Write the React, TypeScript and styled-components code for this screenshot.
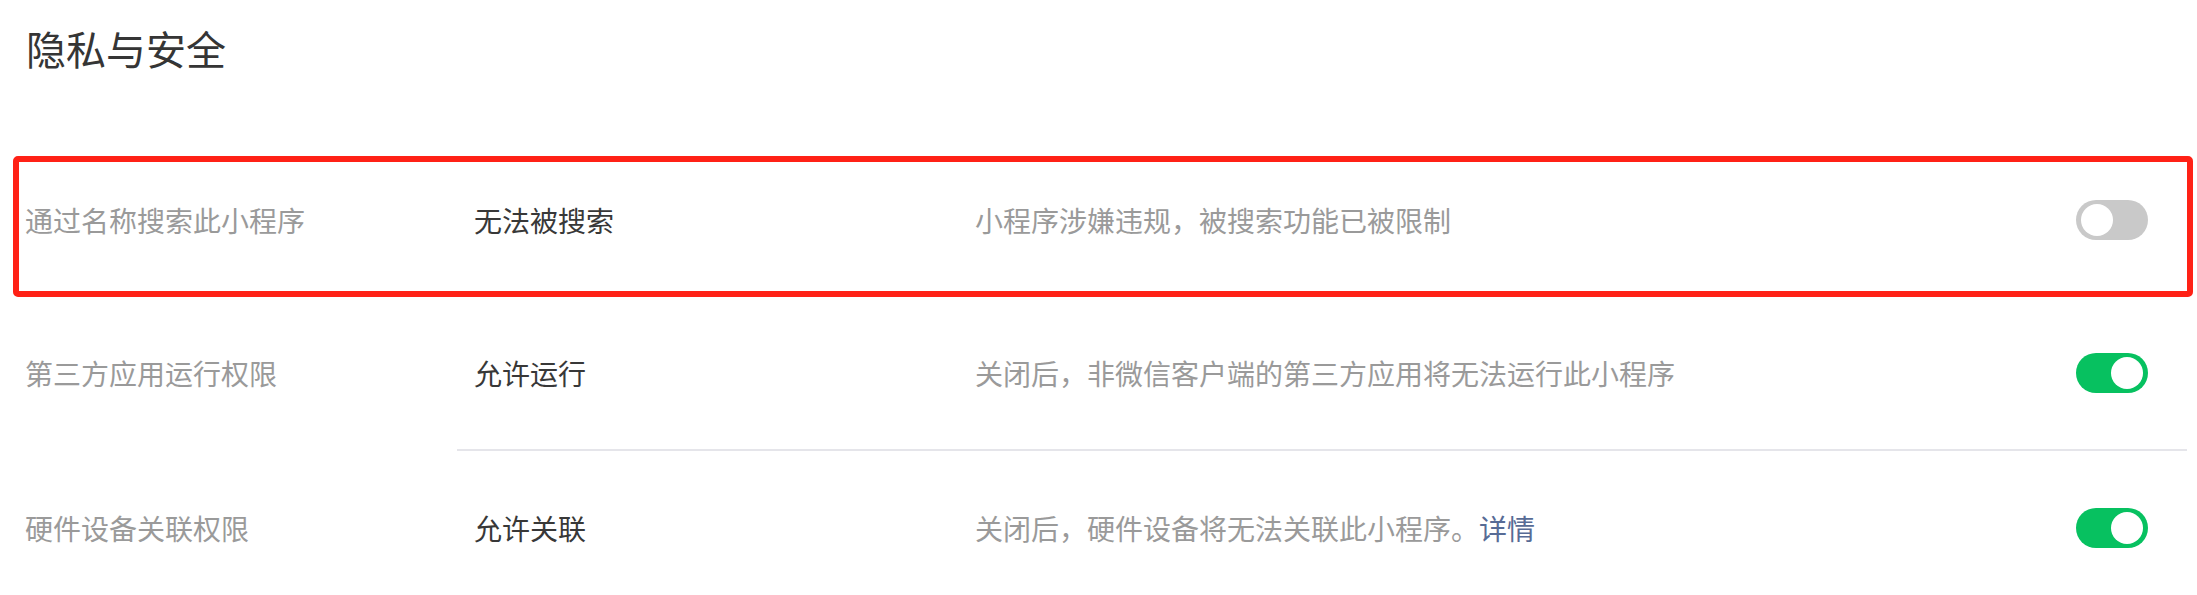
import styled, { createGlobalStyle } from "styled-components";

const GlobalStyle = createGlobalStyle`
  html, body {
    margin: 0;
    padding: 0;
    background: #ffffff;
  }
  body {
    font-family: "Noto Sans CJK SC", "Noto Sans", sans-serif;
    -webkit-font-smoothing: antialiased;
  }
`;

const Page = styled.div`
  width: 2197px;
  height: 595px;
  overflow: hidden;
  background: #fff;
`;

const Title = styled.h1`
  margin: 0;
  padding: 20px 0 0 26px;
  height: 56px;
  font-size: 40px;
  line-height: 56px;
  font-weight: 400;
  color: #353535;
`;

const List = styled.div`
  margin-top: 67px;
  display: flex;
  flex-direction: column;
`;

const Row = styled.div`
  position: relative;
  display: grid;
  grid-template-columns: 449px 501px 1fr 72px;
  align-items: center;
  height: 153px;
  padding: 0 49px 0 25px;
  font-size: 28px;
  line-height: 40px;
`;

const Highlight = styled.div`
  position: absolute;
  top: 13px;
  bottom: -1px;
  left: 13px;
  right: 4px;
  border: 6px solid #ff2116;
  border-radius: 5px;
  pointer-events: none;
`;

const Label = styled.span`
  color: #9a9a9a;
`;

const Value = styled.span`
  color: #383838;
`;

const Desc = styled.span`
  color: #9a9a9a;
`;

const Link = styled.a`
  color: #576b95;
  text-decoration: none;
`;

const Divider = styled.div`
  height: 2px;
  margin-left: 457px;
  width: 1730px;
  background: #e5e5ea;
`;

const Track = styled.div<{ $on: boolean }>`
  position: relative;
  width: 72px;
  height: 40px;
  border-radius: 20px;
  background: ${(p) => (p.$on ? "#07c160" : "#c9c9c9")};
`;

const Knob = styled.div<{ $on: boolean }>`
  position: absolute;
  top: 4px;
  left: ${(p) => (p.$on ? "35px" : "5px")};
  width: 32px;
  height: 32px;
  border-radius: 50%;
  background: #fff;
`;

const Switch = ({ on }: { on: boolean }) => (
  <Track $on={on}>
    <Knob $on={on} />
  </Track>
);

export default function App() {
  return (
    <Page>
      <GlobalStyle />
      <Title>隐私与安全</Title>
      <List>
        <Row>
          <Label>通过名称搜索此小程序</Label>
          <Value>无法被搜索</Value>
          <Desc>小程序涉嫌违规，被搜索功能已被限制</Desc>
          <Switch on={false} />
          <Highlight />
        </Row>
        <Row>
          <Label>第三方应用运行权限</Label>
          <Value>允许运行</Value>
          <Desc>关闭后，非微信客户端的第三方应用将无法运行此小程序</Desc>
          <Switch on />
        </Row>
        <Divider />
        <Row>
          <Label>硬件设备关联权限</Label>
          <Value>允许关联</Value>
          <Desc>
            关闭后，硬件设备将无法关联此小程序。<Link href="#">详情</Link>
          </Desc>
          <Switch on />
        </Row>
      </List>
    </Page>
  );
}
